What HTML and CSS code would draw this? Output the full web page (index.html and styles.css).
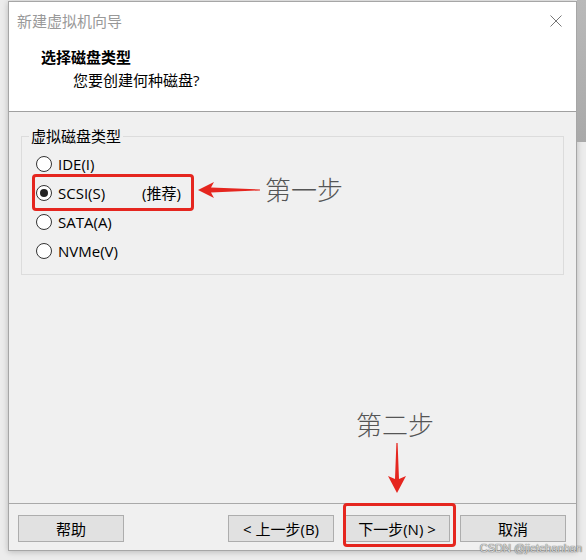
FILE: index.html
```html
<!DOCTYPE html>
<html lang="zh-CN">
<head>
<meta charset="utf-8">
<title>新建虚拟机向导</title>
<link rel="stylesheet" href="styles.css">
</head>
<body>
<div class="desk">
  <div class="dialog">
    <div class="head">
      <div class="titlebar">
        <span class="title">新建虚拟机向导</span>
        <svg class="close" width="12" height="12" viewBox="0 0 12 12"><path d="M0.5 0.5 L11.5 11.5 M11.5 0.5 L0.5 11.5" stroke="#777" stroke-width="1" fill="none"/></svg>
      </div>
      <div class="heading">选择磁盘类型</div>
      <div class="sub">您要创建何种磁盘?</div>
    </div>
    <div class="body">
      <fieldset class="group">
        <legend>虚拟磁盘类型</legend>
        <div class="opts">
          <label class="opt"><input type="radio" name="disk"><span>IDE(I)</span></label>
          <label class="opt"><input type="radio" name="disk" checked><span class="main">SCSI(S)</span><span>(推荐)</span></label>
          <label class="opt"><input type="radio" name="disk"><span>SATA(A)</span></label>
          <label class="opt"><input type="radio" name="disk"><span>NVMe(V)</span></label>
        </div>
      </fieldset>
    </div>
    <div class="foot">
      <button class="btn help">帮助</button>
      <button class="btn">&lt; 上一步(B)</button>
      <button class="btn">下一步(N) &gt;</button>
      <button class="btn">取消</button>
    </div>
  </div>
  <div class="strip"></div>

  <div class="mark mark1"></div>
  <div class="mark mark2"></div>
  <svg class="arrows" width="586" height="560" viewBox="0 0 586 560">
    <polygon points="198,190 214,182 211,187.6 260,189.4 260,190.4 211,192.4 214,198" fill="#e5261f"/>
    <polygon points="397,493 388,476 395,479 396.4,443 397.6,443 399,479 406,476" fill="#e5261f"/>
  </svg>
  <div class="note note1">第一步</div>
  <div class="note note2">第二步</div>
  <div class="wm">CSDN @jietehanhan</div>
</div>
</body>
</html>
```
FILE: styles.css
```css
* { box-sizing: border-box; }
html, body { margin: 0; padding: 0; }
body {
  width: 586px;
  height: 560px;
  overflow: hidden;
  background: #ececec;
  font-family: "Open Sans", "Noto Sans CJK SC", sans-serif;
  font-size: 15px;
  color: #000;
}
.desk {
  position: relative;
  width: 586px;
  height: 560px;
  display: flex;
  align-items: flex-start;
}
.dialog {
  margin: 1px 0 0 8px;
  width: 569px;
  height: 550px;
  border: 1px solid #a6a6a6;
  background: #f0f0f0;
  display: flex;
  flex-direction: column;
  box-shadow: 0 1px 6px rgba(0, 0, 0, 0.22);
}
.strip {
  flex: 1;
  height: 142px;
  background: linear-gradient(#b9b9b9, #a9a9a9);
}
.head {
  height: 110px;
  background: #fff;
  border-bottom: 1px solid #a0a0a0;
  flex: none;
}
.titlebar {
  height: 38px;
  display: flex;
  align-items: center;
  justify-content: space-between;
  padding: 0 14px 0 8px;
}
.title { color: #999; line-height: 20px; }
.close { display: block; }
.heading {
  margin-top: 7px;
  padding-left: 32px;
  font-weight: bold;
  line-height: 20px;
}
.sub {
  margin-top: 3px;
  padding-left: 64px;
  line-height: 20px;
}
.body {
  flex: 1;
  padding: 15px 12px 0 12px;
}
.group {
  margin: 0;
  padding: 0;
  border: 1px solid #dcdcdc;
}
.group legend {
  margin-left: 7px;
  padding: 0 2px;
  line-height: 18px;
}
.opts {
  display: flex;
  flex-direction: column;
  padding: 4px 0 9px 14px;
}
.opt {
  height: 29px;
  display: flex;
  align-items: center;
}
.opt input {
  appearance: none;
  -webkit-appearance: none;
  margin: 0 6px 0 0;
  width: 16px;
  height: 16px;
  border: 1px solid #333;
  border-radius: 50%;
  background: #fff;
  display: grid;
  place-items: center;
}
.opt input:checked::after {
  content: "";
  width: 8px;
  height: 8px;
  border-radius: 50%;
  background: #222;
}
.opt .main { width: 84px; }
.foot {
  height: 47px;
  flex: none;
  border-top: 1px solid #a9a9a9;
  display: flex;
  align-items: flex-start;
  gap: 10px;
  padding: 11px 10px 0 9px;
}
.btn {
  width: 106px;
  height: 27px;
  margin: 0;
  padding: 0;
  border: 1px solid #adadad;
  background: #e1e1e1;
  font: inherit;
  color: #000;
  line-height: 24px;
}
.help { margin-right: auto; }
.mark {
  position: absolute;
  border: 3px solid #e5261f;
  border-radius: 4px;
}
.mark1 { left: 32px; top: 174px; width: 162px; height: 37px; }
.mark2 { left: 343px; top: 503px; width: 113px; height: 44px; }
.arrows { position: absolute; left: 0; top: 0; pointer-events: none; }
.note {
  position: absolute;
  font-family: "Noto Sans CJK SC", sans-serif;
  font-size: 26px;
  line-height: 30px;
  color: #555;
  font-weight: 300;
}
.note1 { left: 265px; top: 174px; }
.note2 { left: 356px; top: 409px; }
.wm {
  position: absolute;
  right: 4px;
  top: 541px;
  font-family: "Liberation Sans", Arial, sans-serif;
  font-size: 11px;
  line-height: 14px;
  color: #d8d8d8;
  text-shadow: 0 0 1px #666, 0 0 1px #666;
}
```
